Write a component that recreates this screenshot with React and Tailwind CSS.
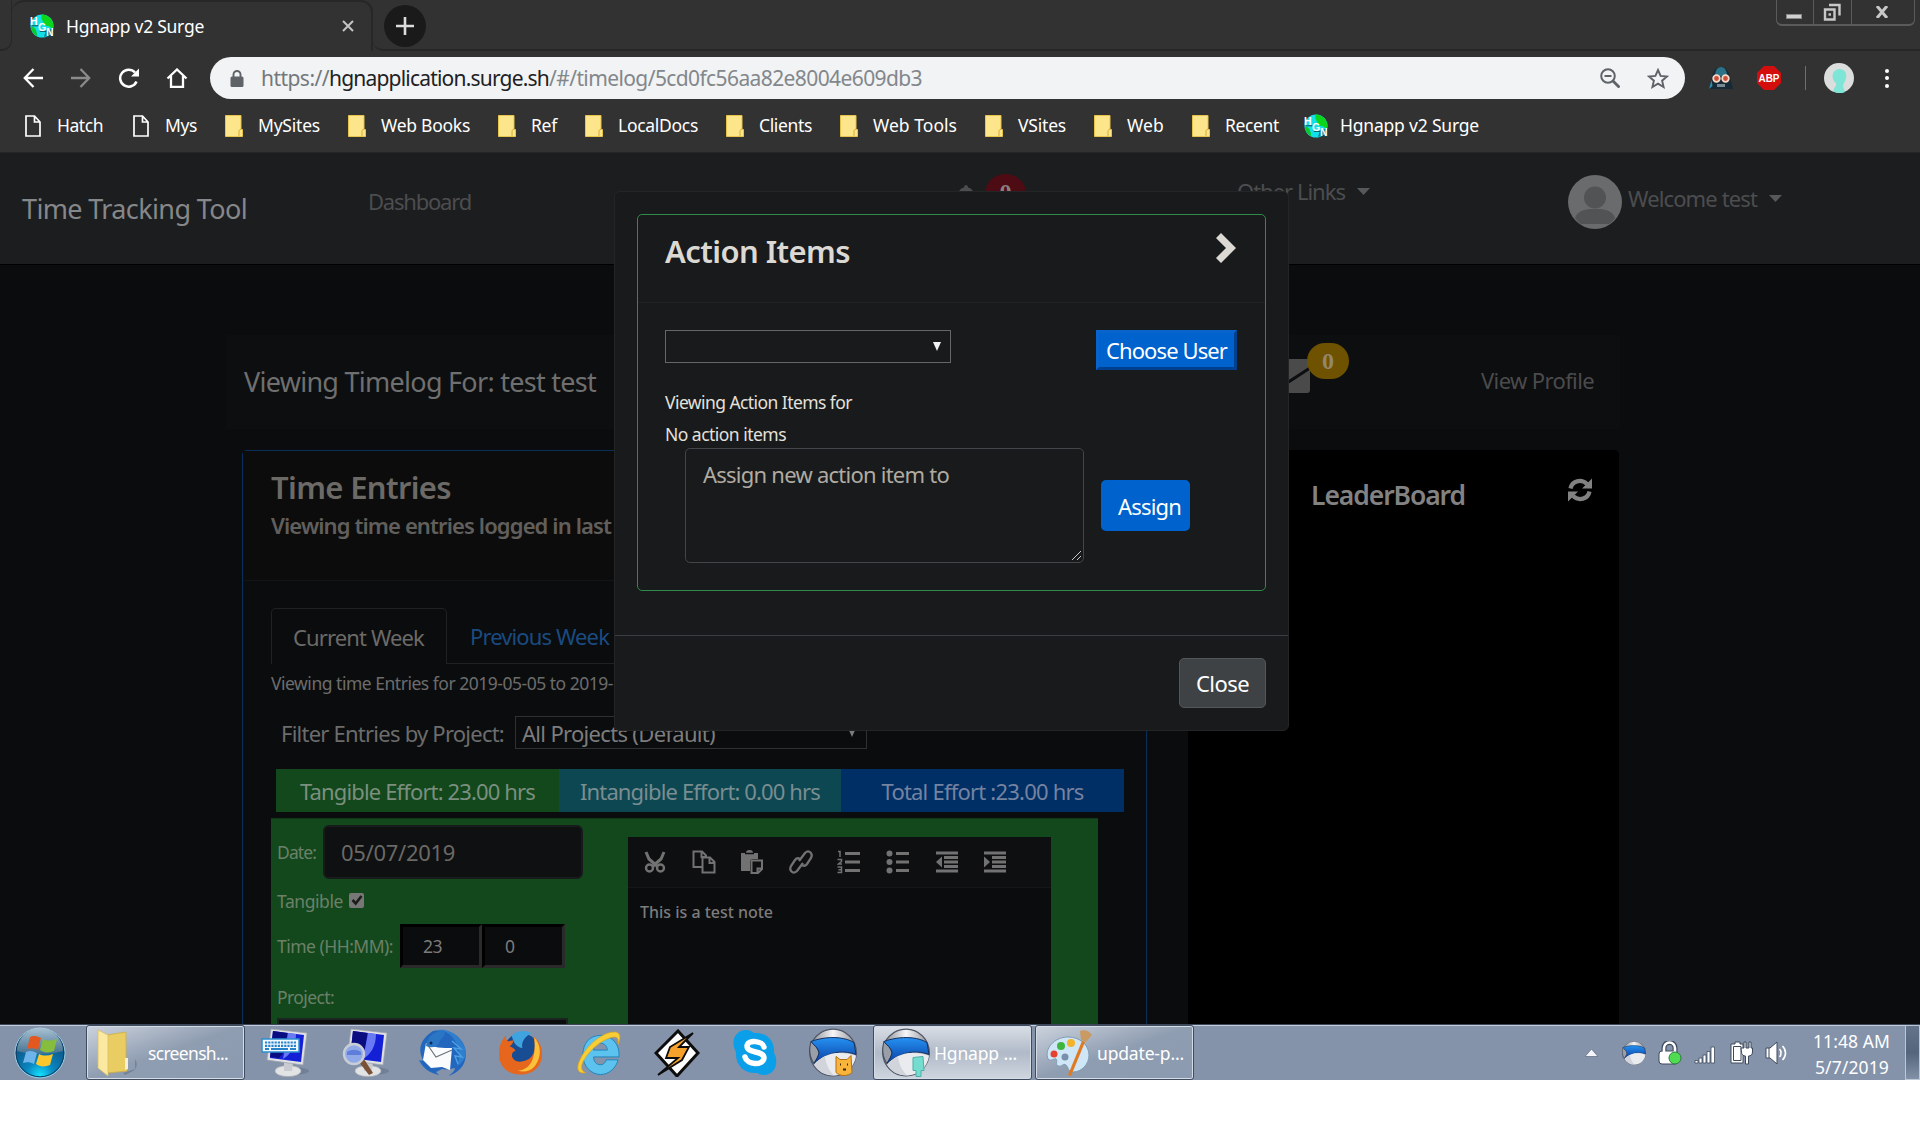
import React, { useLayoutEffect, useRef, useState } from "react";

/* Text on one line whose letter spacing is tuned so that it fills w pixels. */
function Label({ w, className = "", children }) {
  const ref = useRef(null);
  const [spacing, setSpacing] = useState(0);
  useLayoutEffect(() => {
    const natural = ref.current.getBoundingClientRect().width;
    const n = ref.current.textContent.length;
    setSpacing((w - natural) / n);
  }, [w]);
  return (
    <span className={"block shrink-0 whitespace-nowrap leading-[30px] " + className} style={{ width: w }}>
      <span ref={ref} style={{ letterSpacing: spacing }}>{children}</span>
    </span>
  );
}

function HgnIcon({ className = "" }) {
  return (
    <svg viewBox="0 0 24 24" className={"h-6 w-6 shrink-0 " + className}>
      <circle cx="12" cy="12" r="11.500" fill="#12dfe8" />
      <path d="M12 .5c6 0 11.500 5 11.500 11.500 0 2-1.500 3-2.500 2-2-3-6-1-7-4-1-4-4-5-2-9.500z" fill="#0bd61b" />
      <path d="M1 13c3-1 6 3 6 9-3-1-6-5-6-9z" fill="#0cc92a" />
      <path d="M16 16l6-1c-1 4-4 7-8 8z" fill="#06828d" />
      <g fill="#0a4a50" fontFamily="Liberation Sans, sans-serif" fontWeight="700" fontSize="10.500" transform="translate(.8 .8)" aria-hidden="true">
        <path d="M1 11h7M9 16.500h7M17 21.500h6" stroke="#0a4a50" />
      </g>
      <g fill="#fff" fontFamily="Liberation Sans, sans-serif" fontWeight="700" fontSize="10.500">
        <text x="0" y="11">H</text>
        <text x="8" y="16.500">G</text>
        <text x="16" y="21.500">N</text>
      </g>
    </svg>
  );
}

function PageIcon() {
  return (
    <svg viewBox="0 0 16 22" className="h-[22px] w-4 shrink-0" fill="none" stroke="#fff" strokeWidth="1.700">
      <path d="M1 1h8.500L15 7v14H1zM9.500 1v6H15" />
    </svg>
  );
}

function FolderIcon() {
  return (
    <svg viewBox="0 0 18 22" className="h-[22px] w-[18px] shrink-0">
      <path d="M.5.5H16v14h1.500v7H.5z" fill="#fde58b" stroke="#e6c34a" />
      <path d="M14 21v-5.500l2-1.500" fill="none" stroke="#d9ac2c" />
    </svg>
  );
}

const bookmarks = [
  ["page", "Hatch", 46, "ml-[25px]"],
  ["page", "Mys", 32, "ml-[30px]"],
  ["folder", "MySites", 62, "ml-[28px]"],
  ["folder", "Web Books", 89, "ml-[28px]"],
  ["folder", "Ref", 26, "ml-[28px]"],
  ["folder", "LocalDocs", 80, "ml-[28px]"],
  ["folder", "Clients", 53, "ml-[28px]"],
  ["folder", "Web Tools", 84, "ml-[28px]"],
  ["folder", "VSites", 48, "ml-[28px]"],
  ["folder", "Web", 37, "ml-[28px]"],
  ["folder", "Recent", 54, "ml-[28px]"],
  ["hgn", "Hgnapp v2 Surge", 139, "ml-[25px]"],
];

function TabStrip() {
  return (
    <div className="flex h-[51px] items-start">
      <div className="h-[51px] w-3 rounded-br-[10px] border-b-2 border-r border-[#272727]" />
      <div className="flex h-[51px] w-[361px] items-center rounded-t-[12px] border-t-2 border-r-2 border-[#272727] pb-[2px]">
        <HgnIcon className="ml-[18px]" />
        <Label w={138} className="ml-3 text-[17.500px] text-white">Hgnapp v2 Surge</Label>
        <svg viewBox="0 0 12 12" className="ml-[138px] h-3 w-3" stroke="#c4c4c4" strokeWidth="2">
          <path d="M1 1l10 10M11 1L1 11" />
        </svg>
      </div>
      <div className="flex h-[51px] flex-1 items-start rounded-bl-[10px] border-b-2 border-[#272727]">
        <div className="ml-[11px] mt-[5px] flex h-[42px] w-[42px] items-center justify-center rounded-full bg-[#1a1a1a]">
          <svg viewBox="0 0 18 18" className="h-[18px] w-[18px]" stroke="#dcdcdc" strokeWidth="2.600">
            <path d="M9 0v18M0 9h18" />
          </svg>
        </div>
        <div className="ml-auto mr-[5px] flex h-[26px] w-[139px] rounded-b-[6px] border-x border-b-2 border-[#5b5b5b]">
          <div className="flex w-[37px] items-center justify-center border-r border-[#5b5b5b]">
            <div className="mr-[2px] mt-2 h-[5px] w-4 border border-[#888] bg-[#d0d0d0]" />
          </div>
          <div className="flex w-[38px] items-center justify-center border-r border-[#5b5b5b]">
            <svg viewBox="0 0 18 18" className="mr-[2px] h-[18px] w-[18px]" fill="none" stroke="#c8c8c8" strokeWidth="2.400">
              <path d="M2 6.500h9.500v10H2zM6 2h10.500v10.500" />
              <path d="M5.500 11.500h2.500" />
            </svg>
          </div>
          <div className="flex flex-1 items-center justify-center">
            <svg viewBox="0 0 14 12" className="mr-[2px] h-3 w-[14px]" stroke="#c8c8c8" strokeWidth="3">
              <path d="M2 0l10 12M12 0L2 12" />
            </svg>
          </div>
        </div>
      </div>
    </div>
  );
}

function Toolbar() {
  return (
    <div className="flex h-[54px] items-center">
      <svg viewBox="0 0 20 20" className="ml-[23px] h-5 w-5" fill="none" stroke="#fff" strokeWidth="2.300">
        <path d="M20 10H2M10.500 1L1.800 10l8.700 9" />
      </svg>
      <svg viewBox="0 0 20 20" className="ml-7 h-5 w-5" fill="none" stroke="#8b8b8b" strokeWidth="2.300">
        <path d="M0 10h18M9.500 1l8.700 9-8.700 9" />
      </svg>
      <svg viewBox="0 0 22 20" className="ml-[27px] h-5 w-[22px]" fill="none" stroke="#fff" strokeWidth="2.500">
        <path d="M18.500 13.500A8.500 8.500 0 1 1 17 4.500" />
        <path d="M21 .5v8h-8z" fill="#fff" stroke="none" />
      </svg>
      <svg viewBox="0 0 22 20" className="ml-[26px] h-5 w-[22px]" fill="none" stroke="#fff" strokeWidth="2.300">
        <path d="M1.500 10.500L11 1.500l9.500 9M5 8v11h12V8" />
      </svg>
      <div className="ml-[22px] flex h-[42px] w-[1475px] items-center rounded-full bg-[#f1f3f4] text-[21px]">
        <svg viewBox="0 0 14 17" className="ml-5 h-[17px] w-[14px]">
          <path d="M3.500 7V4.500a3.500 3.500 0 0 1 7 0V7" fill="none" stroke="#5f6368" strokeWidth="1.900" />
          <rect x="0.500" y="6.500" width="13" height="10.500" rx="1.500" fill="#5f6368" />
        </svg>
        <Label w={68} className="ml-[17px] text-[#74787c]">https://</Label>
        <Label w={220} className="text-[#202124]">hgnapplication.surge.sh</Label>
        <Label w={373} className="text-[#83878b]">/#/timelog/5cd0fc56aa82e8004e609db3</Label>
        <svg viewBox="0 0 20 20" className="ml-[678px] h-5 w-5" fill="none" stroke="#5f6368" strokeWidth="2">
          <circle cx="8" cy="8" r="6.800" />
          <path d="M13 13l6.500 6.500" strokeWidth="2.800" />
          <path d="M4.500 8h7" />
        </svg>
        <svg viewBox="0 0 22 21" className="ml-[27px] h-[21px] w-[22px]" fill="none" stroke="#5f6368" strokeWidth="1.900">
          <path d="M11 2l2.600 5.900 6.400.6-4.900 4.200 1.500 6.300L11 15.700 5.400 19l1.500-6.300L2 8.500l6.400-.6z" />
        </svg>
      </div>
      <svg viewBox="0 0 24 22" className="ml-6 h-[22px] w-6">
        <path d="M0 22l3-12C4 3 8 0 12 0s8 3 9 10l3 12z" fill="#152a36" />
        <path d="M6 9c0-5 2-9 6-9s6 4 6 9z" fill="#2b7187" />
        <path d="M0 22l2.500-9 1 6z" fill="#2b8fb0" />
        <circle cx="7.500" cy="11.500" r="3.300" fill="#c94f39" stroke="#f5d9c8" strokeWidth="1.800" />
        <circle cx="16.500" cy="11.500" r="3.300" fill="#c94f39" stroke="#f5d9c8" strokeWidth="1.800" />
        <path d="M9 17v3M11 17V20M13 17V20M15 17v3" stroke="#dbe7ec" />
      </svg>
      <svg viewBox="0 0 24 24" className="ml-6 h-6 w-6">
        <path d="M7 0h10l7 7v10l-7 7H7l-7-7V7z" fill="#d40d0d" />
        <text x="12" y="16" textAnchor="middle" textLength="21" lengthAdjust="spacingAndGlyphs" fill="#fff" fontFamily="Liberation Sans, sans-serif" fontWeight="700" fontSize="11.500">ABP</text>
      </svg>
      <div className="ml-6 h-6 w-px bg-[#6f6f6f]" />
      <svg viewBox="0 0 30 30" className="ml-[18px] h-[30px] w-[30px]">
        <circle cx="15" cy="15" r="15" fill="#dcdedd" />
        <path d="M9 28c1-4 4-5 3-8-5-3-5-13 3-14 8 0 9 8 5 14-2 3 0 6 1 9-4 2-9 1-12-1z" fill="#7fe5d6" />
      </svg>
      <div className="ml-[31px] flex flex-col gap-[3.500px]">
        <div className="h-1 w-1 rounded-full bg-white" />
        <div className="h-1 w-1 rounded-full bg-white" />
        <div className="h-1 w-1 rounded-full bg-white" />
      </div>
    </div>
  );
}

function Bookmarks() {
  return (
    <div className="flex h-12 items-center border-b border-[#262626] pb-[5px] text-[17.500px] text-white">
      {bookmarks.map(([icon, text, w, gap]) => (
        <div key={text} className={"flex items-center " + gap}>
          {icon === "page" && <PageIcon />}
          {icon === "folder" && <FolderIcon />}
          {icon === "hgn" && <HgnIcon />}
          <Label w={w} className={icon === "page" ? "ml-4 pb-[2px]" : icon === "hgn" ? "ml-3 pb-[2px]" : "ml-[15px] pb-[2px]"}>{text}</Label>
        </div>
      ))}
    </div>
  );
}

function Caret({ className = "" }) {
  return (
    <svg viewBox="0 0 13 7" className={"h-[7px] w-[13px] " + className} fill="#56585a">
      <path d="M0 0h13L6.500 7z" />
    </svg>
  );
}

function NavBar() {
  return (
    <div className="flex h-[111px] items-start bg-[#1c1d1f] text-[22px] text-[#4c4d4f]">
      <Label w={225} className="ml-[22px] mt-[41px] text-[27px] text-[#868789]">Time Tracking Tool</Label>
      <Label w={103} className="ml-[121px] mt-[33px]">Dashboard</Label>
      <svg viewBox="0 0 22 24" className="ml-[484px] mt-8 h-6 w-[22px]" fill="#4c4d4f">
        <path d="M11 0c1 0 2 1 2 2.500 4 1 6 4 6 8 0 5 1 6 3 8H0c2-2 3-3 3-8 0-4 2-7 6-8C9 1 10 0 11 0z" />
      </svg>
      <div className="ml-[8px] mt-[21px] flex h-[40px] w-[41px] justify-center rounded-full bg-[#4d0c13] font-['Liberation_Serif'] text-[24px] font-bold text-[#8a7f80]">0</div>
      <Label w={108} className="ml-[211px] mt-[23px]">Other Links</Label>
      <Caret className="ml-3 mt-[35px]" />
      <svg viewBox="0 0 54 54" className="ml-[198px] mt-[22px] h-[54px] w-[54px]">
        <circle cx="27" cy="27" r="27" fill="#6a6b6d" />
        <circle cx="27" cy="22.500" r="11" fill="#525355" />
        <path d="M7 43c2-6 7-8 14-9h12c7 1 12 3 14 9-2 3-4 5-6 6H13c-2-1-4-3-6-6z" fill="#525355" />
      </svg>
      <Label w={129} className="ml-[6px] mt-[30px]">Welcome test</Label>
      <Caret className="ml-3 mt-[42px]" />
    </div>
  );
}

function UserBar() {
  return (
    <div className="ml-[226px] mt-[70px] flex h-[94px] w-[1394px] items-start bg-[#0d0e10]">
      <Label w={352} className="ml-[18px] mt-[32px] text-[27px] text-[#6f6f6f]">Viewing Timelog For: test test</Label>
      <svg viewBox="0 0 46 34" className="ml-[668px] mt-[24px] h-[34px] w-[46px]">
        <rect width="46" height="34" rx="3" fill="#4a4a4a" />
        <path d="M0 7l20 15c2 1.500 4 1.500 6 0L46 9" fill="none" stroke="#0d0e10" strokeWidth="3" />
      </svg>
      <div className="relative -ml-[3px] mt-[8px] flex h-9 w-[42px] items-center justify-center rounded-full bg-[#6f5200] font-['Liberation_Serif'] text-[24px] font-bold text-[#93866a]">0</div>
      <Label w={113} className="ml-[132px] mt-[30px] text-[22px] text-[#4b4b4c]">View Profile</Label>
    </div>
  );
}

const editorIcons = [
  <svg key="cut" viewBox="0 0 22 22" className="mr-[1px] h-[22px] w-[22px]" fill="none" stroke="#727272" strokeWidth="2.400">
    <path d="M2 1l3 7 8 7M20 1l-3 7-8 7" strokeWidth="3" />
    <circle cx="5.500" cy="17" r="3.500" />
    <circle cx="16.500" cy="17" r="3.500" />
  </svg>,
  <svg key="copy" viewBox="0 0 24 24" className="h-6 w-6" fill="none" stroke="#727272" strokeWidth="2">
    <path d="M10 17H1.500V1.500H10l4 4V8M9.500 2v5H14" />
    <path d="M10.500 7.500H18l4.500 4.500v10.500h-12zM17.500 8v5H22" />
  </svg>,
  <svg key="paste" viewBox="0 0 24 24" className="h-6 w-6">
    <path d="M1 3h5c0-2 1-3 3.500-3S13 1 13 3h5v6h-5c-2 0-3 1-3 3v9H1z" fill="#727272" />
    <path d="M5 3.500h9" stroke="#0e0f10" strokeWidth="1.500" />
    <path d="M11.500 10.500H22V19l-4 4h-6.500zM17.500 23v-4.500H22" fill="none" stroke="#727272" strokeWidth="2" />
  </svg>,
  <svg key="link" viewBox="0 0 24 24" className="h-6 w-6" fill="none" stroke="#727272" strokeWidth="2.300">
    <path d="M10 11l6-8c2-2 4-2 5.500-.5S23 6 22 8l-4 6c-1.500 2-3.500 2-5 1" />
    <path d="M14 13l-6 8c-2 2-4 2-5.500.5S1 18 2 16l4-6c1.500-2 3.500-2 5-1" />
  </svg>,
  <svg key="ol" viewBox="0 0 24 24" className="h-6 w-6" fill="none" stroke="#727272" strokeWidth="3.200">
    <path d="M8 3.500h15M8 12h15M8 20.500h15" />
    <path d="M1 1.500h2V7M.5 9.500h4v2l-3 2.500h3.500M.5 17h4v5.500h-4M1.500 19.700h3" strokeWidth="1.500" />
  </svg>,
  <svg key="ul" viewBox="0 0 24 24" className="h-6 w-6" fill="none" stroke="#727272" strokeWidth="3.200">
    <path d="M10 3.500h13M10 12h13M10 20.500h13" />
    <g fill="#727272" stroke="none"><circle cx="3.500" cy="3.500" r="3" /><circle cx="3.500" cy="12" r="3" /><circle cx="3.500" cy="20.500" r="3" /></g>
  </svg>,
  <svg key="outdent" viewBox="0 0 24 24" className="h-6 w-6" fill="none" stroke="#727272" strokeWidth="2.800">
    <path d="M1 3h22M9 7.500h14M9 12h14M9 16.500h14M1 21h22" />
    <path d="M7 6.500v11L1 12z" fill="#727272" stroke="none" />
  </svg>,
  <svg key="indent" viewBox="0 0 24 24" className="h-6 w-6" fill="none" stroke="#727272" strokeWidth="2.800">
    <path d="M1 3h22M9 7.500h14M9 12h14M9 16.500h14M1 21h22" />
    <path d="M1 6.500v11l6-5.500z" fill="#727272" stroke="none" />
  </svg>,
];

function EntryForm() {
  return (
    <div className="ml-7 mt-[6px] flex h-[208px] w-[827px] overflow-hidden border-t border-[#12381a] bg-[#12481c] text-[17.500px] text-[#6c8069]">
      <div className="w-[357px] shrink-0 pl-[6px] pt-[6px]">
        <div className="flex h-[54px] items-center">
          <Label w={39}>Date:</Label>
          <div className="ml-[7px] flex h-[54px] w-[260px] items-center rounded-[6px] border-2 border-[#181b1c] bg-[#0f1011] text-[22px] text-[#6b6966]">
            <Label w={114} className="ml-4">05/07/2019</Label>
          </div>
        </div>
        <div className="mt-[7px] flex h-[30px] items-center">
          <Label w={66}>Tangible</Label>
          <div className="ml-[6px] mb-[2px] flex h-[15px] w-[15px] items-center justify-center rounded-[2px] bg-[#777]">
            <svg viewBox="0 0 12 12" className="h-3 w-3" fill="none" stroke="#1c1c1c" strokeWidth="2.600"><path d="M1.500 6l3.200 3.500L10.500 2" /></svg>
          </div>
        </div>
        <div className="mt-[8px] flex h-11 items-center">
          <Label w={116}>Time (HH:MM):</Label>
          <div className="ml-[7px] flex h-11 w-[82px] items-center border-[3px] border-b-[#2a2a2a] border-l-black border-r-[#2a2a2a] border-t-black bg-[#0b0c0e] text-[#7b7b7b]">
            <Label w={19} className="ml-5">23</Label>
          </div>
          <div className="flex h-11 w-[83px] items-center border-[3px] border-b-[#2a2a2a] border-l-black border-r-[#2a2a2a] border-t-black bg-[#0b0c0e] text-[#7b7b7b]">
            <Label w={10} className="ml-5">0</Label>
          </div>
        </div>
        <Label w={57} className="mt-[14px]">Project:</Label>
        <div className="mt-[6px] h-8 w-[291px] border-2 border-[#1b2420] bg-[#0b0c0e]" />
      </div>
      <div className="mt-[18px] w-[423px] bg-[#0b0c0e]">
        <div className="flex h-[51px] items-center gap-[24.600px] border-b border-[#151617] bg-[#0e0f10] pl-[16px]">
          {editorIcons}
        </div>
        <Label w={133} className="ml-3 pt-[9px] text-[16px] font-medium text-[#7c7c7c]">This is a test note</Label>
      </div>
    </div>
  );
}

function TimeEntries() {
  return (
    <div className="h-[575px] w-[905px] shrink-0 rounded-t-[5px] border-x border-t border-[#0a2f5a] bg-[#0b0c0e]">
      <div className="h-[130px] border-b border-[#131415] bg-[#0c0c0c] pl-7 pt-[21px] font-semibold text-[#6c6a67]">
        <Label w={180} className="text-[31px]">Time Entries</Label>
        <Label w={340} className="mt-[8px] text-[22px] text-[#615f5c]">Viewing time entries logged in last</Label>
      </div>
      <div className="ml-7 mt-[27px] flex h-[56px] text-[22px]">
        <div className="flex h-[56px] w-[176px] items-center rounded-t-[5px] border-x border-t border-[#1f2123]">
          <Label w={131} className="ml-[21px] text-[#6c6a67]">Current Week</Label>
        </div>
        <div className="flex flex-1 items-center border-b border-[#1f2123]">
          <Label w={139} className="ml-[23px] pt-px text-[#1a4b80]">Previous Week</Label>
        </div>
      </div>
      <Label w={342} className="ml-7 mt-[4px] text-[17.500px] text-[#6c6c6c]">Viewing time Entries for 2019-05-05 to 2019-</Label>
      <div className="ml-[38px] mt-[18px] flex h-[33px] items-center text-[22px]">
        <Label w={223} className="text-[#6c6c6c]">Filter Entries by Project:</Label>
        <div className="ml-[11px] flex h-[33px] w-[352px] items-center border border-[#2e3032] text-[#7d7d7d]">
          <Label w={193} className="ml-[6px]">All Projects (Default)</Label>
          <svg viewBox="0 0 8 9" className="ml-[133px] h-[9px] w-2" fill="#7d7d7d"><path d="M0 0h8L4 9z" /></svg>
        </div>
      </div>
      <div className="ml-[33px] mt-[20px] flex h-[43px] w-[848px] text-[22px]">
        <div className="flex w-[283px] items-center justify-center bg-[#12481c]"><Label w={235} className="text-[#7c8f7f]">Tangible Effort: 23.00 hrs</Label></div>
        <div className="flex w-[282px] items-center justify-center bg-[#0d4751]"><Label w={240} className="text-[#7a8d91]">Intangible Effort: 0.00 hrs</Label></div>
        <div className="flex w-[283px] items-center justify-center bg-[#002f66]"><Label w={202} className="text-[#7583a0]">Total Effort :23.00 hrs</Label></div>
      </div>
      <EntryForm />
    </div>
  );
}

function LeaderBoard() {
  return (
    <div className="ml-[41px] flex h-[575px] w-[431px] items-start rounded-t-[5px] bg-black">
      <Label w={154} className="ml-[123px] mt-[30px] text-[26.500px] font-semibold text-[#828282]">LeaderBoard</Label>
      <svg viewBox="0 0 24 24" className="ml-[103px] mt-[28px] h-6 w-6" fill="none" stroke="#828282" strokeWidth="4.200">
        <path d="M2.500 10.500C4 3 13 .5 19 6M21.500 13.500C20 21 11 23.500 5 18" />
        <path d="M24 .5v10h-10zM0 23.500v-10h10z" fill="#828282" stroke="none" />
      </svg>
    </div>
  );
}

function Modal() {
  return (
    <div className="absolute left-[614px] top-[191px] h-[540px] w-[675px] rounded-[6px] border border-[#232526] bg-[#191a1c] px-[22px] pt-[22px]">
      <div className="h-[377px] w-[629px] rounded-[5px] border border-[#2f8a4b] bg-[#181a1b]">
        <div className="flex h-[88px] items-start border-b border-[#202223] pl-[27px]">
          <Label w={185} className="mt-[21px] text-[31px] font-semibold text-[#dcd9d4]">Action Items</Label>
          <svg viewBox="0 0 21 30" className="ml-[365px] mt-[18px] h-[30px] w-[21px]" fill="#dcd9d4">
            <path d="M6 0L21 15 6 30 1 25l10-10L1 5z" />
          </svg>
        </div>
        <div className="flex items-start pl-[27px] pt-[27px]">
          <div className="flex h-[33px] w-[286px] items-center justify-end border border-[#63676a] pr-[9px]">
            <svg viewBox="0 0 8 9" className="h-[9px] w-2" fill="#f2f2f2"><path d="M0 0h8L4 9z" /></svg>
          </div>
          <div className="ml-[145px] flex h-10 w-[141px] items-center border-[3px] border-b-[#00408f] border-l-[#0864cc] border-r-[#00408f] border-t-[#0864cc] bg-[#0062cc] text-[22px] text-white">
            <Label w={121} className="ml-[7px]">Choose User</Label>
          </div>
        </div>
        <div className="pl-[27px] pt-[17px] text-[17.500px] text-[#e4e1dc]">
          <Label w={187}>Viewing Action Items for</Label>
          <Label w={121} className="mt-[2px]">No action items</Label>
        </div>
        <div className="-mt-px flex items-start pl-[47px] text-[22px]">
          <div className="relative h-[115px] w-[399px] rounded-[5px] border border-[#42464a] pl-[17px] pt-[10px] text-[#b0aba2]">
            <Label w={246}>Assign new action item to</Label>
            <svg viewBox="0 0 9 9" className="absolute bottom-[2px] right-[2px] h-[9px] w-[9px]" stroke="#c8c8c8"><path d="M0 9l9-9M5 9l4-4" /></svg>
          </div>
          <div className="ml-[17px] mt-8 flex h-[51px] w-[89px] items-center rounded-[5px] bg-[#0062cc] text-white">
            <Label w={63} className="ml-[17px] mt-[1px]">Assign</Label>
          </div>
        </div>
      </div>
      <div className="-mx-[22px] mt-[44px] flex justify-end border-t border-[#3a3e42] pr-[22px] pt-[22px]">
        <div className="flex h-[50px] w-[87px] items-center justify-center rounded-[5px] border border-[#53575a] bg-[#3e4245] text-[22px] text-white">
          <Label w={53}>Close</Label>
        </div>
      </div>
    </div>
  );
}

function StartOrb() {
  return (
    <svg viewBox="0 0 52 52" className="ml-[14px] h-[52px] w-[52px] shrink-0">
      <defs>
        <radialGradient id="orb" cx=".5" cy=".95" r=".8">
          <stop offset="0" stopColor="#12e4ff" /><stop offset=".35" stopColor="#0a86c0" /><stop offset="1" stopColor="#0c4a78" />
        </radialGradient>
        <linearGradient id="gloss" x2="0" y2="1"><stop offset="0" stopColor="#c4d6e2" /><stop offset="1" stopColor="#4d7490" /></linearGradient>
      </defs>
      <circle cx="26" cy="26" r="25" fill="url(#orb)" stroke="#9ecbe0" strokeWidth="1" />
      <circle cx="26" cy="26" r="23.800" fill="none" stroke="#0d3f63" />
      <path d="M3 24a23 23 0 0 1 46 0c-12 4-34 4-46 0z" fill="url(#gloss)" opacity=".85" />
      <path d="M16 10c4-2 7-1 11 1l-3 12c-4-2-7-2-11-1z" fill="#e2581f" />
      <path d="M29 12c4 2 8 2 14 0l-3 12c-5 2-10 2-14-1z" fill="#86bd3c" />
      <path d="M12 25c4-2 7-1 11 1l-3 11c-4-2-7-2-11-1z" fill="#6db4ea" />
      <path d="M25 27c4 2 9 2 14 0l-3 11c-5 2-10 2-14-1z" fill="#fdc72b" />
    </svg>
  );
}

function Monitor({ children }) {
  return (
    <svg viewBox="0 0 48 50" className="h-[50px] w-12 shrink-0">
      <ellipse cx="31" cy="43" rx="17" ry="4" fill="#5d6d84" opacity=".5" />
      <ellipse cx="27" cy="43" rx="13" ry="5.500" fill="#e2e3e5" stroke="#a8abb0" strokeWidth=".6" />
      <path d="M23 34h9l-1 9h-8z" fill="#c9cbd0" />
      <path d="M10 1l36 4-4 32L6 32z" fill="#dfe1e5" stroke="#9fa3ab" strokeWidth=".7" />
      <path d="M12 3l31 4-3 27-31-4z" fill="#1320d6" />
      <path d="M12 3l14 2c0 12-3 20-8 25l-9-1z" fill="#0a0d80" />
      <path d="M27 5l8 1c0 12-5 20-13 25z" fill="#8fa0ff" opacity=".7" />
      {children}
    </svg>
  );
}

function IronIcon({ className = "", children }) {
  return (
    <svg viewBox="0 0 48 48" className={"shrink-0 " + className}>
      <defs>
        <linearGradient id="silver" x2="1"><stop offset="0" stopColor="#7e828a" /><stop offset=".5" stopColor="#f6f6f8" /><stop offset="1" stopColor="#8b8f98" /></linearGradient>
        <linearGradient id="band" x2="0" y2="1"><stop offset="0" stopColor="#2592f2" /><stop offset="1" stopColor="#0a3ea5" /></linearGradient>
      </defs>
      <circle cx="24" cy="24" r="23.300" fill="url(#silver)" stroke="#515866" strokeWidth="1.200" />
      <path d="M2 13c2 3 7 5 8 12-1 4-3 7-5 10C0 28 0 20 2 13z" fill="#9a9ea7" stroke="#3c4658" />
      <path d="M2 13c5-2 7-2 11-3 11-2 24-1 32 4l2 12c-11-4-22-3-31 2-5 2-8 4-11 7 2-4 5-8 5-11-1-5-5-7-8-11z" fill="url(#band)" stroke="#17305e" />
      <path d="M5 36c8-9 20-15 42-9-1 10-9 20-23 20-8 0-15-4-19-11z" fill="#e9ebef" />
      <path d="M5 36c3-3 7-6 11-8 1 8 4 14 9 19C16 47 9 43 5 36z" fill="#c2c5cc" opacity=".6" />
      {children}
    </svg>
  );
}

function TaskButton({ active, className = "", children }) {
  return (
    <div className={"flex h-[55px] w-[159px] shrink-0 items-center rounded-[3px] border border-[#3f4c60] shadow-[inset_0_0_0_1px_#d5dce5] text-[17.500px] text-white " + (active ? "bg-linear-to-b from-[#dadfe6] via-[#b0bac8] to-[#cfd6df] " : "bg-linear-to-br from-[#ccd3dd] via-[#8f9db1] to-[#8b9ab0] ") + className}>
      {children}
    </div>
  );
}

function Taskbar() {
  return (
    <div className="flex h-14 items-center border-t border-[#3c485a] bg-[#8493aa] shadow-[inset_0_1px_0_#c3cddc]">
      <StartOrb />
      <TaskButton className="ml-5">
        <svg viewBox="0 0 40 48" className="ml-[10px] h-12 w-10">
          <path d="M26 44l12-4V30c3 4 2 10-2 12l-8 4z" fill="#5b697e" opacity=".5" />
          <path d="M10 6l19-3v30h1v9l-20 2z" fill="#e9cd62" stroke="#cfae43" strokeWidth=".8" />
          <path d="M1 1l10 5v41L1 39z" fill="#fbe9a2" stroke="#d9bf62" strokeWidth=".8" />
          <path d="M28 29h3v11l-3 1z" fill="#f5f0da" />
        </svg>
        <Label w={80} className="ml-[11px]">screensh...</Label>
      </TaskButton>
      <div className="ml-4 flex"><Monitor>
        <rect x="1" y="11" width="37" height="13" fill="#f4f8fc" stroke="#2b8ed0" strokeWidth="1.500" />
        <path d="M4 14.500h31M4 17.800h31" stroke="#2782cc" strokeWidth="2.200" strokeDasharray="2.200 1" />
        <path d="M4 21h4M10 21h17M29 21h6" stroke="#2782cc" strokeWidth="1.800" />
      </Monitor></div>
      <div className="ml-[32px] flex"><Monitor>
        <path d="M18 34l10 13 4-2-9-14z" fill="#7b5137" />
        <circle cx="13" cy="26" r="10" fill="#8fa9e8" stroke="#c9ced6" strokeWidth="2.400" />
        <path d="M6 24c5-3 9-3 14 0v3H6z" fill="#5272d6" opacity=".8" />
      </Monitor></div>
      <svg viewBox="0 0 48 48" className="ml-[29px] h-12 w-12 shrink-0">
        <path d="M15 2C32-2 47 9 48 24c0 13-8 20-18 23 5-3 7-6 7-8-5 1-9 2-13 1l-6 3 3 3C11 44 4 38 1 31c2 1 3 1 4 0C0 22 1 11 15 2z" fill="#2266bd" />
        <path d="M15 2c11-2 18 3 22 10 5 7 5 16 2 25 6-3 9-9 9-14C45 8 31-3 15 2z" fill="#2f7fcf" />
        <path d="M34 12l9 8-7-1 8 9-7-1 3 8" fill="none" stroke="#4ba0e2" strokeWidth="1.500" />
        <path d="M8 14c7 5 17 5 26 5l-2 22-8-3-11 1-8-8z" fill="#fafbfc" />
        <path d="M9 15l9 13 16-7" fill="none" stroke="#6d747e" strokeWidth="1.200" />
        <path d="M8 17C9 8 16 2 26 1c2 4 0 7-4 10-1 6-6 9-14 6z" fill="#2a76c4" />
        <circle cx="13" cy="14" r="1.500" fill="#0c2a55" />
      </svg>
      <svg viewBox="0 0 46 46" className="ml-[32px] h-[46px] w-[45px] shrink-0">
        <circle cx="24" cy="21" r="18" fill="#184c93" />
        <path d="M14 5c6-5 14-6 20-2-5 2-11 8-9 15-5-1-9-4-11-13z" fill="#3fa3df" />
        <path d="M36 6c6 5 9 11 9 18 0 13-9 21-22 21C10 45 1 37 1 24 1 16 4 9 8 5c0 3 0 4 2 6l6-1c-1 3-1 4-4 6 2 1 5 2 6 5-3 0-5 4-3 7 4 6 12 4 17 1 6-5 7-14 4-23z" fill="#e5661c" />
        <path d="M37 7c7 8 8 19 1 29-5 6-12 7-18 5 11 0 20-10 17-34z" fill="#fcc13a" />
      </svg>
      <svg viewBox="0 0 46 46" className="ml-[33px] h-[46px] w-[45px] shrink-0">
        <path d="M43 30c-2 8-9 15-18 15S7 37 7 25 14 5 25 5s20 8 19 22H18c0 5 3 8 7 8 3 0 5-2 6-5zM18 20h14c0-4-3-7-7-7s-7 3-7 7z" fill="#5cc3ee" stroke="#2084bd" strokeWidth="1" fillRule="evenodd" />
        <path d="M10 43C2 45-1 39 5 28 13 12 32-1 42 2c3 1 4 6 1 12 1-6-1-8-6-7C26 9 10 23 6 35c-1 4 0 7 4 8z" fill="#f8cd35" stroke="#e0a61a" strokeWidth=".7" />
      </svg>
      <svg viewBox="0 0 46 48" className="ml-[33px] h-12 w-[46px] shrink-0">
        <path d="M24 2l20 22-21 23L2 24z" fill="#fff" stroke="#0d0d0d" strokeWidth="3" />
        <path d="M39 4L16 18l-4 11h12L4 46l24-15 7-13H25z" fill="#f6a12b" stroke="#0d0d0d" strokeWidth="1.800" />
      </svg>
      <svg viewBox="0 0 44 46" className="ml-[33px] h-[46px] w-11 shrink-0">
        <path d="M13 0c3 0 6 1 8 3 13-1 21 8 20 20 5 8 2 22-10 22-3 0-5-1-7-2C11 44 2 35 3 22-3 12 2 0 13 0z" fill="#0a9fe8" />
        <path d="M31 17c-1-6-16-8-17-1 0 8 17 4 17 12-1 8-17 7-19-1" fill="none" stroke="#fff" strokeWidth="5.500" strokeLinecap="round" />
      </svg>
      <IronIcon className="ml-[32px] h-[49px] w-12">
        <path d="M27 28l4 3h7l4-4 1 17c-4 4-12 4-16 0z" fill="#f9b53b" stroke="#b16f12" />
        <path d="M31 36h1M38 36h1M34 41h3" stroke="#3a2508" strokeWidth="1.800" />
      </IronIcon>
      <TaskButton active className="ml-[16px]">
        <IronIcon className="ml-[8px] h-[49px] w-12">
          <path d="M31 29l10-1 1 14h-3v6h-5v-6h-3z" fill="#74ddd0" stroke="#4cb0a6" />
        </IronIcon>
        <Label w={83} className="ml-[4px]">Hgnapp ...</Label>
      </TaskButton>
      <TaskButton className="ml-[3px]">
        <svg viewBox="0 0 46 48" className="ml-[10px] h-12 w-[46px]">
          <path d="M22 8c12 0 21 8 21 18 0 9-7 17-16 17-5 0-4-4-7-7-3-2-4 2-8 1-3-1 0-6-2-7s-5 3-8 0C-2 20 8 8 22 8z" fill="#cfe6f6" stroke="#7f9bb4" />
          <circle cx="8" cy="25" r="3.500" fill="#e6402f" /><circle cx="15" cy="17" r="4" fill="#3fb53f" /><circle cx="25" cy="14" r="4" fill="#f3b32b" /><circle cx="19" cy="28" r="3.500" fill="#7890ab" />
          <path d="M36 12l3 1-14 34-3-1z" fill="#e07a22" />
          <path d="M34 2c5-2 9 0 12 4l-6 7-5-2z" fill="#c99a62" />
        </svg>
        <Label w={87} className="ml-[5px]">update-p...</Label>
      </TaskButton>
      <svg viewBox="0 0 13 8" className="ml-[391px] h-2 w-[13px]" fill="#f4f6f9" stroke="#5b687c" strokeWidth=".7"><path d="M0 7.500L6.500 0 13 7.500z" /></svg>
      <IronIcon className="ml-[24px] h-6 w-6" />
      <svg viewBox="0 0 24 24" className="ml-3 h-6 w-6 shrink-0">
        <path d="M6 11V7a5 5 0 0 1 11 0v4" fill="none" stroke="#3e4a5c" strokeWidth="5" />
        <rect x="1" y="10" width="19" height="13" rx="3" fill="#fff" stroke="#3e4a5c" />
        <path d="M6 11V7a5 5 0 0 1 11 0v4" fill="none" stroke="#fff" strokeWidth="2.600" />
        <circle cx="17" cy="17" r="6" fill="#4fdc52" stroke="#2f7b3f" />
      </svg>
      <svg viewBox="0 0 22 18" className="ml-[12px] mt-1 h-[18px] w-[22px] shrink-0" fill="#fff" stroke="#3e4a5c" strokeWidth=".8">
        <path d="M1 14.500h3V17H1zM5 12h3v5H5zM9 9h3v8H9zM13 5.500h3V17h-3zM17 1h3.500v16H17z" />
      </svg>
      <svg viewBox="0 0 24 24" className="ml-[13px] h-6 w-6 shrink-0">
        <path d="M2 3h4V1h5v2h3v19H2z" fill="#fff" stroke="#3e4a5c" />
        <path d="M4.500 5.500H12v14H4.500z" fill="none" stroke="#3e4a5c" />
        <path d="M12 7h3V1h2v6h3V1h2v6h1.500v4c0 3-2 4-4 4v8h-3v-8c-2 0-4-1-4-4z" fill="#fff" stroke="#3e4a5c" />
      </svg>
      <svg viewBox="0 0 24 24" className="ml-[12px] h-6 w-6 shrink-0">
        <path d="M1 7h4l7-6v22l-7-6H1z" fill="#fff" stroke="#3e4a5c" />
        <path d="M4 7v10" stroke="#3e4a5c" />
        <path d="M14.500 8c2 2 2 6 0 8M17.500 5c4 4 4 10 0 14" fill="none" stroke="#fff" strokeWidth="1.600" />
      </svg>
      <div className="mb-[2px] ml-[24px] text-[17.500px] text-white">
        <Label w={77} className="h-[26px] leading-[25px]">11:48 AM</Label>
        <Label w={74} className="ml-[2px] h-[25px] leading-[25px]">5/7/2019</Label>
      </div>
      <div className="ml-auto h-[55px] w-[15px] border border-[#bcc8d6] bg-linear-to-b from-[#64748b] via-[#54657c] to-[#8291a6]" />
    </div>
  );
}

export default function App() {
  return (
    <div className="relative h-[1148px] w-[1920px] overflow-hidden bg-white font-['Noto_Sans',sans-serif]">
      <div className="bg-[#323232]">
        <TabStrip />
        <Toolbar />
        <Bookmarks />
      </div>
      <div className="h-[871px] overflow-hidden bg-[#0b0c0e]">
        <NavBar />
        <div className="h-px bg-black" />
        <UserBar />
        <div className="ml-[242px] mt-[21px] flex">
          <TimeEntries />
          <LeaderBoard />
        </div>
      </div>
      <Taskbar />
      <Modal />
    </div>
  );
}
